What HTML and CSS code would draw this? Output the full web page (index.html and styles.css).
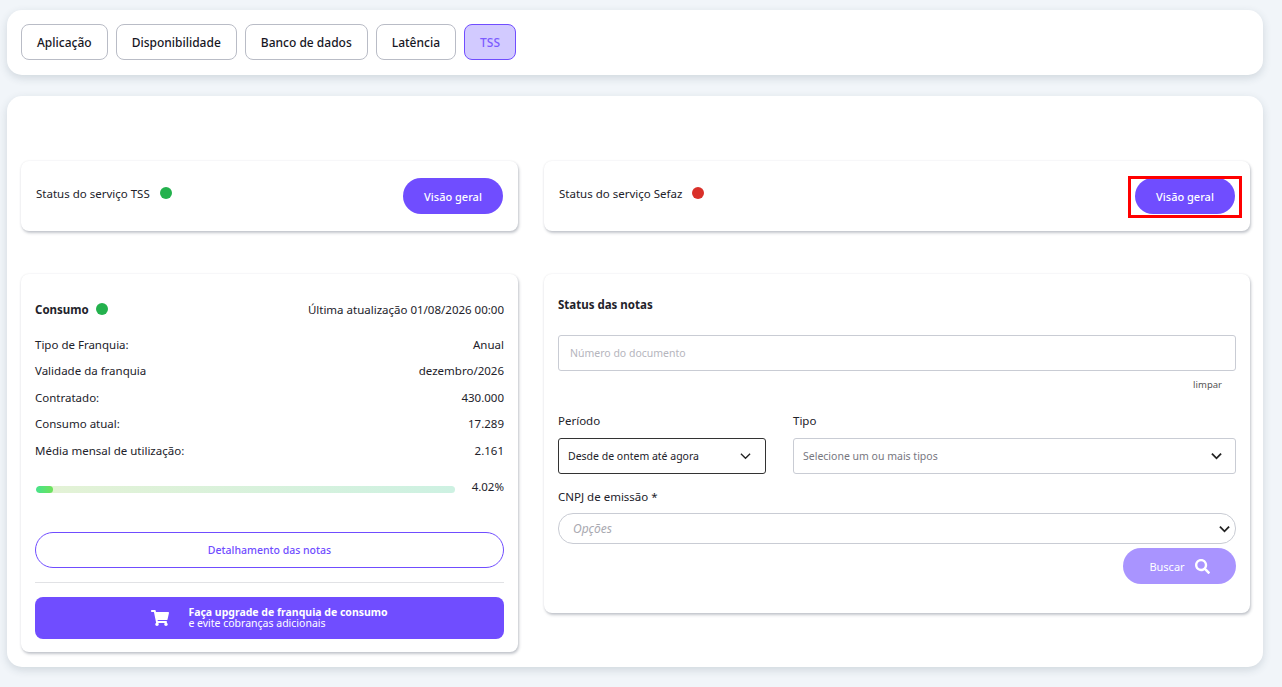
FILE: index.html
```html
<!DOCTYPE html>
<html lang="pt-BR">
<head>
    <meta charset="UTF-8">
    <meta name="viewport" content="width=device-width, initial-scale=1.0">
    <title>Monitoramento</title>
    <link rel="stylesheet" href="styles.css">
</head>
<body>
    <nav class="tabs-card">
        <button class="tab">Aplicação</button>
        <button class="tab">Disponibilidade</button>
        <button class="tab">Banco de dados</button>
        <button class="tab">Latência</button>
        <button class="tab tab-active">TSS</button>
    </nav>

    <main class="main-card">
        <div class="grid status-row">
            <section class="card status-card">
                <div class="status-label">Status do serviço TSS <span class="dot dot-green"></span></div>
                <button class="btn-primary">Visão geral</button>
            </section>
            <section class="card status-card">
                <div class="status-label">Status do serviço Sefaz <span class="dot dot-red"></span></div>
                <span class="highlight-wrap">
                    <button class="btn-primary">Visão geral</button>
                    <span class="highlight"></span>
                </span>
            </section>
        </div>

        <div class="grid content-row">
            <section class="card consumo-card">
                <div class="row consumo-head">
                    <span class="consumo-title"><b>Consumo</b> <span class="dot dot-green"></span></span>
                    <span>Última atualização 01/08/2026 00:00</span>
                </div>
                <div class="row"><span>Tipo de Franquia:</span><span>Anual</span></div>
                <div class="row"><span>Validade da franquia</span><span>dezembro/2026</span></div>
                <div class="row"><span>Contratado:</span><span>430.000</span></div>
                <div class="row"><span>Consumo atual:</span><span>17.289</span></div>
                <div class="row"><span>Média mensal de utilização:</span><span>2.161</span></div>
                <div class="progress-row">
                    <div class="progress"><div class="progress-fill" style="width: 4.02%"></div></div>
                    <span>4.02%</span>
                </div>
                <button class="btn-outline">Detalhamento das notas</button>
                <hr class="divider">
                <button class="btn-upgrade">
                    <svg class="cart" viewBox="0 0 576 512"><path fill="#fff" d="M528.12 301.319l47.273-208C578.806 78.301 567.391 64 551.99 64H159.208l-9.166-44.81C147.758 8.021 137.93 0 126.529 0H24C10.745 0 0 10.745 0 24v16c0 13.255 10.745 24 24 24h69.883l70.248 343.435C147.325 417.1 136 435.222 136 456c0 30.928 25.072 56 56 56s56-25.072 56-56c0-15.674-6.447-29.835-16.824-40h209.647C430.447 426.165 424 440.326 424 456c0 30.928 25.072 56 56 56s56-25.072 56-56c0-22.172-12.888-41.332-31.579-50.405l5.517-24.276c3.413-15.018-8.002-29.319-23.403-29.319H218.117l-6.545-32h293.145c11.206 0 20.92-7.754 23.403-18.681z"/></svg>
                    <span class="upgrade-text"><b>Faça upgrade de franquia de consumo</b><br>e evite cobranças adicionais</span>
                </button>
            </section>

            <section class="card notas-card">
                <h2 class="notas-title">Status das notas</h2>
                <div class="input">Número do documento</div>
                <div class="limpar">limpar</div>
                <div class="filters">
                    <div class="field-periodo">
                        <label class="label">Período</label>
                        <div class="select select-active">
                            <span>Desde de ontem até agora</span>
                            <svg class="chevron" viewBox="0 0 12 8"><polyline points="1,1.5 6,6.5 11,1.5"/></svg>
                        </div>
                    </div>
                    <div class="field-tipo">
                        <label class="label">Tipo</label>
                        <div class="select">
                            <span>Selecione um ou mais tipos</span>
                            <svg class="chevron chevron-bold" viewBox="0 0 12 8"><polyline points="1,1.5 6,6.5 11,1.5"/></svg>
                        </div>
                    </div>
                </div>
                <label class="label label-cnpj">CNPJ de emissão *</label>
                <div class="select-round">
                    <span>Opções</span>
                    <svg class="chevron chevron-bold" viewBox="0 0 12 8"><polyline points="1,1.5 6,6.5 11,1.5"/></svg>
                </div>
                <div class="actions">
                    <button class="btn-search">Buscar
                        <svg class="search" viewBox="0 0 512 512"><path fill="#fff" d="M505 442.7L405.3 343c-4.5-4.5-10.6-7-17-7H372c27.6-35.3 44-79.7 44-128C416 93.1 322.9 0 208 0S0 93.1 0 208s93.1 208 208 208c48.3 0 92.7-16.4 128-44v16.3c0 6.4 2.5 12.5 7 17l99.7 99.7c9.4 9.4 24.6 9.4 33.9 0l28.3-28.3c9.4-9.4 9.4-24.6.1-34zM208 336c-70.7 0-128-57.2-128-128 0-70.7 57.2-128 128-128 70.7 0 128 57.2 128 128 0 70.7-57.2 128-128 128z"/></svg>
                    </button>
                </div>
            </section>
        </div>
    </main>
</body>
</html>
```

FILE: styles.css
```css
* {
    box-sizing: border-box;
}

body {
    margin: 0;
    padding: 10px 19px 0 7px;
    height: 687px;
    overflow: hidden;
    background: #f1f5f9;
    font-family: "Noto Sans", "Open Sans", sans-serif;
    font-size: 11.5px;
    color: #22222a;
}

button {
    font-family: inherit;
    cursor: pointer;
}

.tabs-card {
    height: 65px;
    padding: 14px;
    margin-bottom: 21px;
    display: flex;
    gap: 8px;
    background: #fff;
    border-radius: 15px;
    box-shadow: 0 3px 8px rgba(40, 60, 80, 0.16);
}

.tab {
    height: 36px;
    padding: 0 15px;
    background: #fff;
    border: 1px solid #b9bcc6;
    border-radius: 8px;
    font-size: 12px;
    font-weight: 500;
    color: #17171f;
}

.tab-active {
    background: #d2caff;
    border-color: #704dff;
    color: #7c5cff;
}

.main-card {
    height: 571px;
    padding: 65px 13px 0 14px;
    background: #fff;
    border-radius: 15px;
    box-shadow: 0 3px 8px rgba(40, 60, 80, 0.16);
}

.grid {
    display: grid;
    grid-template-columns: 497px 706px;
    gap: 26px;
}

.status-row {
    margin-bottom: 43px;
}

.content-row {
    align-items: start;
}

.card {
    background: #fff;
    border-radius: 8px;
    box-shadow: 1px 2px 3px rgba(60, 70, 90, 0.3), 0 0 2px rgba(60, 70, 90, 0.1);
}

.status-card {
    height: 70px;
    padding: 17px 15px 0 15px;
    display: flex;
    justify-content: space-between;
    align-items: flex-start;
}

.status-label {
    display: flex;
    align-items: center;
    gap: 10px;
    height: 30px;
}

.dot {
    display: inline-block;
    width: 12px;
    height: 12px;
    border-radius: 50%;
}

.dot-green {
    background: #23b14d;
}

.dot-red {
    background: #d9302a;
}

.btn-primary {
    width: 100px;
    height: 36px;
    border: none;
    border-radius: 18px;
    background: #704dff;
    color: #fff;
    font-size: 11px;
    font-weight: 500;
}

.highlight-wrap {
    position: relative;
    display: block;
}

.highlight {
    position: absolute;
    left: -7px;
    top: -2px;
    width: 114px;
    height: 42px;
    border: 3px solid #f00;
}

.consumo-card {
    height: 378px;
    padding: 0 14px;
}

.row {
    display: flex;
    justify-content: space-between;
    align-items: center;
    height: 26.5px;
}

.consumo-head {
    height: 26px;
    margin-top: 22px;
    margin-bottom: 9px;
}

.consumo-title {
    display: flex;
    align-items: center;
    gap: 7px;
}

.progress-row {
    display: flex;
    justify-content: space-between;
    align-items: center;
    height: 20px;
    margin-top: 13px;
    margin-bottom: 35px;
}

.progress {
    width: 419px;
    height: 7px;
    margin-left: 1px;
    margin-top: 5px;
    border-radius: 4px;
    background: linear-gradient(90deg, #e4f2d5, #cdf1e2);
    overflow: hidden;
}

.progress-fill {
    height: 100%;
    border-radius: 4px;
    background: linear-gradient(90deg, #46e38d, #6fe25a);
}

.btn-outline {
    display: block;
    width: 100%;
    height: 36px;
    background: #fff;
    border: 1px solid #704dff;
    border-radius: 18px;
    color: #704dff;
    font-size: 10.5px;
    font-weight: 500;
}

.divider {
    margin: 14px 0;
    border: none;
    border-top: 1px solid #e1e2e5;
}

.btn-upgrade {
    width: 100%;
    height: 42px;
    display: flex;
    align-items: center;
    justify-content: center;
    gap: 19px;
    background: #704dff;
    border: none;
    border-radius: 8px;
    color: #fff;
    font-size: 10.5px;
    line-height: 11px;
    text-align: left;
}

.cart {
    width: 18px;
    height: 16px;
}

.notas-card {
    height: 339px;
    padding: 0 14px;
}

.notas-title {
    margin: 23px 0 22px;
    font-size: 11.5px;
    line-height: 16px;
    font-weight: 700;
}

.input {
    height: 36px;
    display: flex;
    align-items: center;
    padding: 0 11px;
    border: 1px solid #c9ccd4;
    border-radius: 3px;
    color: #b5b5bd;
    font-size: 10.5px;
}

.limpar {
    margin: 7px 14px 0 0;
    text-align: right;
    font-size: 9.5px;
    line-height: 14px;
    color: #555;
}

.filters {
    display: flex;
    gap: 27px;
    margin-top: 20px;
}

.field-periodo {
    width: 208px;
}

.field-tipo {
    flex: 1;
}

.label {
    display: block;
    height: 17px;
    line-height: 17px;
}

.select {
    height: 36px;
    margin-top: 9px;
    display: flex;
    justify-content: space-between;
    align-items: center;
    padding: 0 13px 0 9px;
    border: 1px solid #c9ccd4;
    border-radius: 3px;
    color: #77777f;
    font-size: 10.5px;
}

.select-active {
    border-color: #333;
    color: #22222a;
    padding-right: 14px;
}

.chevron {
    width: 11px;
    height: 8px;
    fill: none;
    stroke: #222;
    stroke-width: 1.4;
}

.chevron-bold {
    stroke-width: 2;
}

.label-cnpj {
    margin-top: 14px;
}

.select-round {
    height: 31px;
    margin-top: 8px;
    display: flex;
    justify-content: space-between;
    align-items: center;
    padding: 0 5px 0 14px;
    border: 1px solid #c9ccd4;
    border-radius: 15px;
    color: #a9a9b1;
    font-style: italic;
    font-size: 12px;
}

.actions {
    display: flex;
    justify-content: flex-end;
    margin-top: 4px;
}

.btn-search {
    width: 113px;
    height: 36px;
    display: flex;
    align-items: center;
    justify-content: center;
    gap: 10px;
    border: none;
    border-radius: 18px;
    background: #a994ff;
    color: #fff;
    font-size: 11px;
}

.search {
    width: 15px;
    height: 15px;
}
```
